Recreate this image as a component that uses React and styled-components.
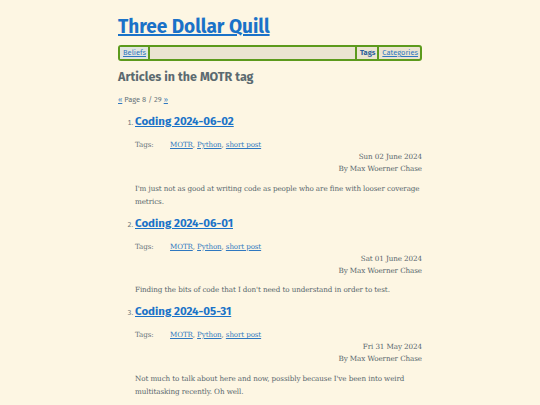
import React from "react";
import styled, { createGlobalStyle } from "styled-components";

const Global = createGlobalStyle`
  html, body { margin: 0; padding: 0; background: #fdf6e3; }
  body { font-family: "DejaVu Serif", serif; color: #5b6a70; }
  a { color: #1f74c8; }
`;

const Page = styled.div`
  width: 304px;
  margin: 0 auto;
  padding-top: 16px;
`;

const SiteTitle = styled.h1`
  margin: 0;
  font-family: "Fira Sans", Lato, sans-serif;
  font-size: 19px;
  font-weight: 700;
  line-height: 22px;
  a { color: #1a72c8; text-decoration-thickness: 1.5px; }
`;

const Nav = styled.nav`
  margin-top: 7px;
  display: flex;
  align-items: stretch;
  height: 12px;
  border: 2px solid #5c9a1c;
  border-radius: 3px;
  background: #ebe4d1;
  font-family: "Fira Sans", Lato, sans-serif;
  font-size: 7.5px;
  line-height: 12px;
`;

const NavItem = styled.a`
  padding: 0 2px 0 3px;
  color: #2f78c0;
  background: ${(p) => (p.$tint ? "#e1e6df" : "transparent")};
  font-weight: ${(p) => (p.$current ? 700 : 400)};
  text-decoration: ${(p) => (p.$current ? "none" : "underline")};
  border-left: ${(p) => (p.$lb ? "2px solid #5c9a1c" : "none")};
  border-right: ${(p) => (p.$rb ? "2px solid #5c9a1c" : "none")};
  ${(p) => p.$current && "color: #2a5f9a;"}
`;

const Spacer = styled.div`
  flex: 1;
`;

const Heading = styled.h2`
  margin: 8px 0 0;
  font-family: "Fira Sans", Lato, sans-serif;
  font-size: 12.5px;
  font-weight: 700;
  line-height: 16px;
  color: #5b6a70;
`;

const Pager = styled.p`
  margin: 9px 0 0;
  font-family: "Fira Sans", Lato, sans-serif;
  font-size: 7.5px;
  line-height: 12px;
  color: #66737a;
  a { color: #2f78c0; }
`;

const List = styled.ol`
  margin: 7px 0 0;
  padding: 0 0 0 17px;
  font-size: 7px;
`;

const Item = styled.li`
  margin-bottom: 7px;
  font-family: "Fira Sans", Lato, sans-serif;
  color: #66737a;
`;

const ItemTitle = styled.h3`
  display: inline;
  margin: 0;
  font-family: "Fira Sans", Lato, sans-serif;
  font-size: 11.5px;
  font-weight: 700;
  line-height: 16px;
  a { color: #1a72c8; text-decoration-thickness: 1.3px; }
`;

const TitleLine = styled.div`
  line-height: 16px;
`;

const Tags = styled.div`
  margin-top: 8px;
  display: flex;
  font-family: "DejaVu Serif", serif;
  font-size: 7.1px;
  line-height: 12px;
  letter-spacing: -0.1px;
`;

const TagsLabel = styled.span`
  width: 35px;
  color: #66737a;
`;

const TagLink = styled.a`
  color: #2f78c0;
`;

const Byline = styled.div`
  text-align: right;
  font-family: "DejaVu Serif", serif;
  font-size: 7.2px;
  line-height: 12px;
  letter-spacing: -0.1px;
  color: #56656b;
`;

const Summary = styled.p`
  margin: 6.5px 0 0;
  font-family: "DejaVu Serif", serif;
  font-size: 7.2px;
  line-height: 13px;
  letter-spacing: -0.1px;
  color: #56656b;
`;

const posts = [
  {
    title: "Coding 2024-06-02",
    date: "Sun 02 June 2024",
    text: "I'm just not as good at writing code as people who are fine with looser coverage metrics.",
  },
  {
    title: "Coding 2024-06-01",
    date: "Sat 01 June 2024",
    text: "Finding the bits of code that I don't need to understand in order to test.",
  },
  {
    title: "Coding 2024-05-31",
    date: "Fri 31 May 2024",
    text: "Not much to talk about here and now, possibly because I've been into weird multitasking recently. Oh well.",
  },
];

export default function App() {
  return (
    <>
      <Global />
      <Page>
        <SiteTitle>
          <a href="#">Three Dollar Quill</a>
        </SiteTitle>
        <Nav>
          <NavItem href="#" $tint $rb>Beliefs</NavItem>
          <Spacer />
          <NavItem href="#" $current $lb $rb>Tags</NavItem>
          <NavItem href="#">Categories</NavItem>
        </Nav>
        <Heading>Articles in the MOTR tag</Heading>
        <Pager>
          <a href="#">«</a> Page 8 / 29 <a href="#">»</a>
        </Pager>
        <List>
          {posts.map((p) => (
            <Item key={p.title}>
              <TitleLine>
                <ItemTitle>
                  <a href="#">{p.title}</a>
                </ItemTitle>
              </TitleLine>
              <Tags>
                <TagsLabel>Tags:</TagsLabel>
                <span>
                  <TagLink href="#">MOTR</TagLink>, <TagLink href="#">Python</TagLink>,{" "}
                  <TagLink href="#">short post</TagLink>
                </span>
              </Tags>
              <Byline>{p.date}</Byline>
              <Byline>By Max Woerner Chase</Byline>
              <Summary>{p.text}</Summary>
            </Item>
          ))}
        </List>
      </Page>
    </>
  );
}
